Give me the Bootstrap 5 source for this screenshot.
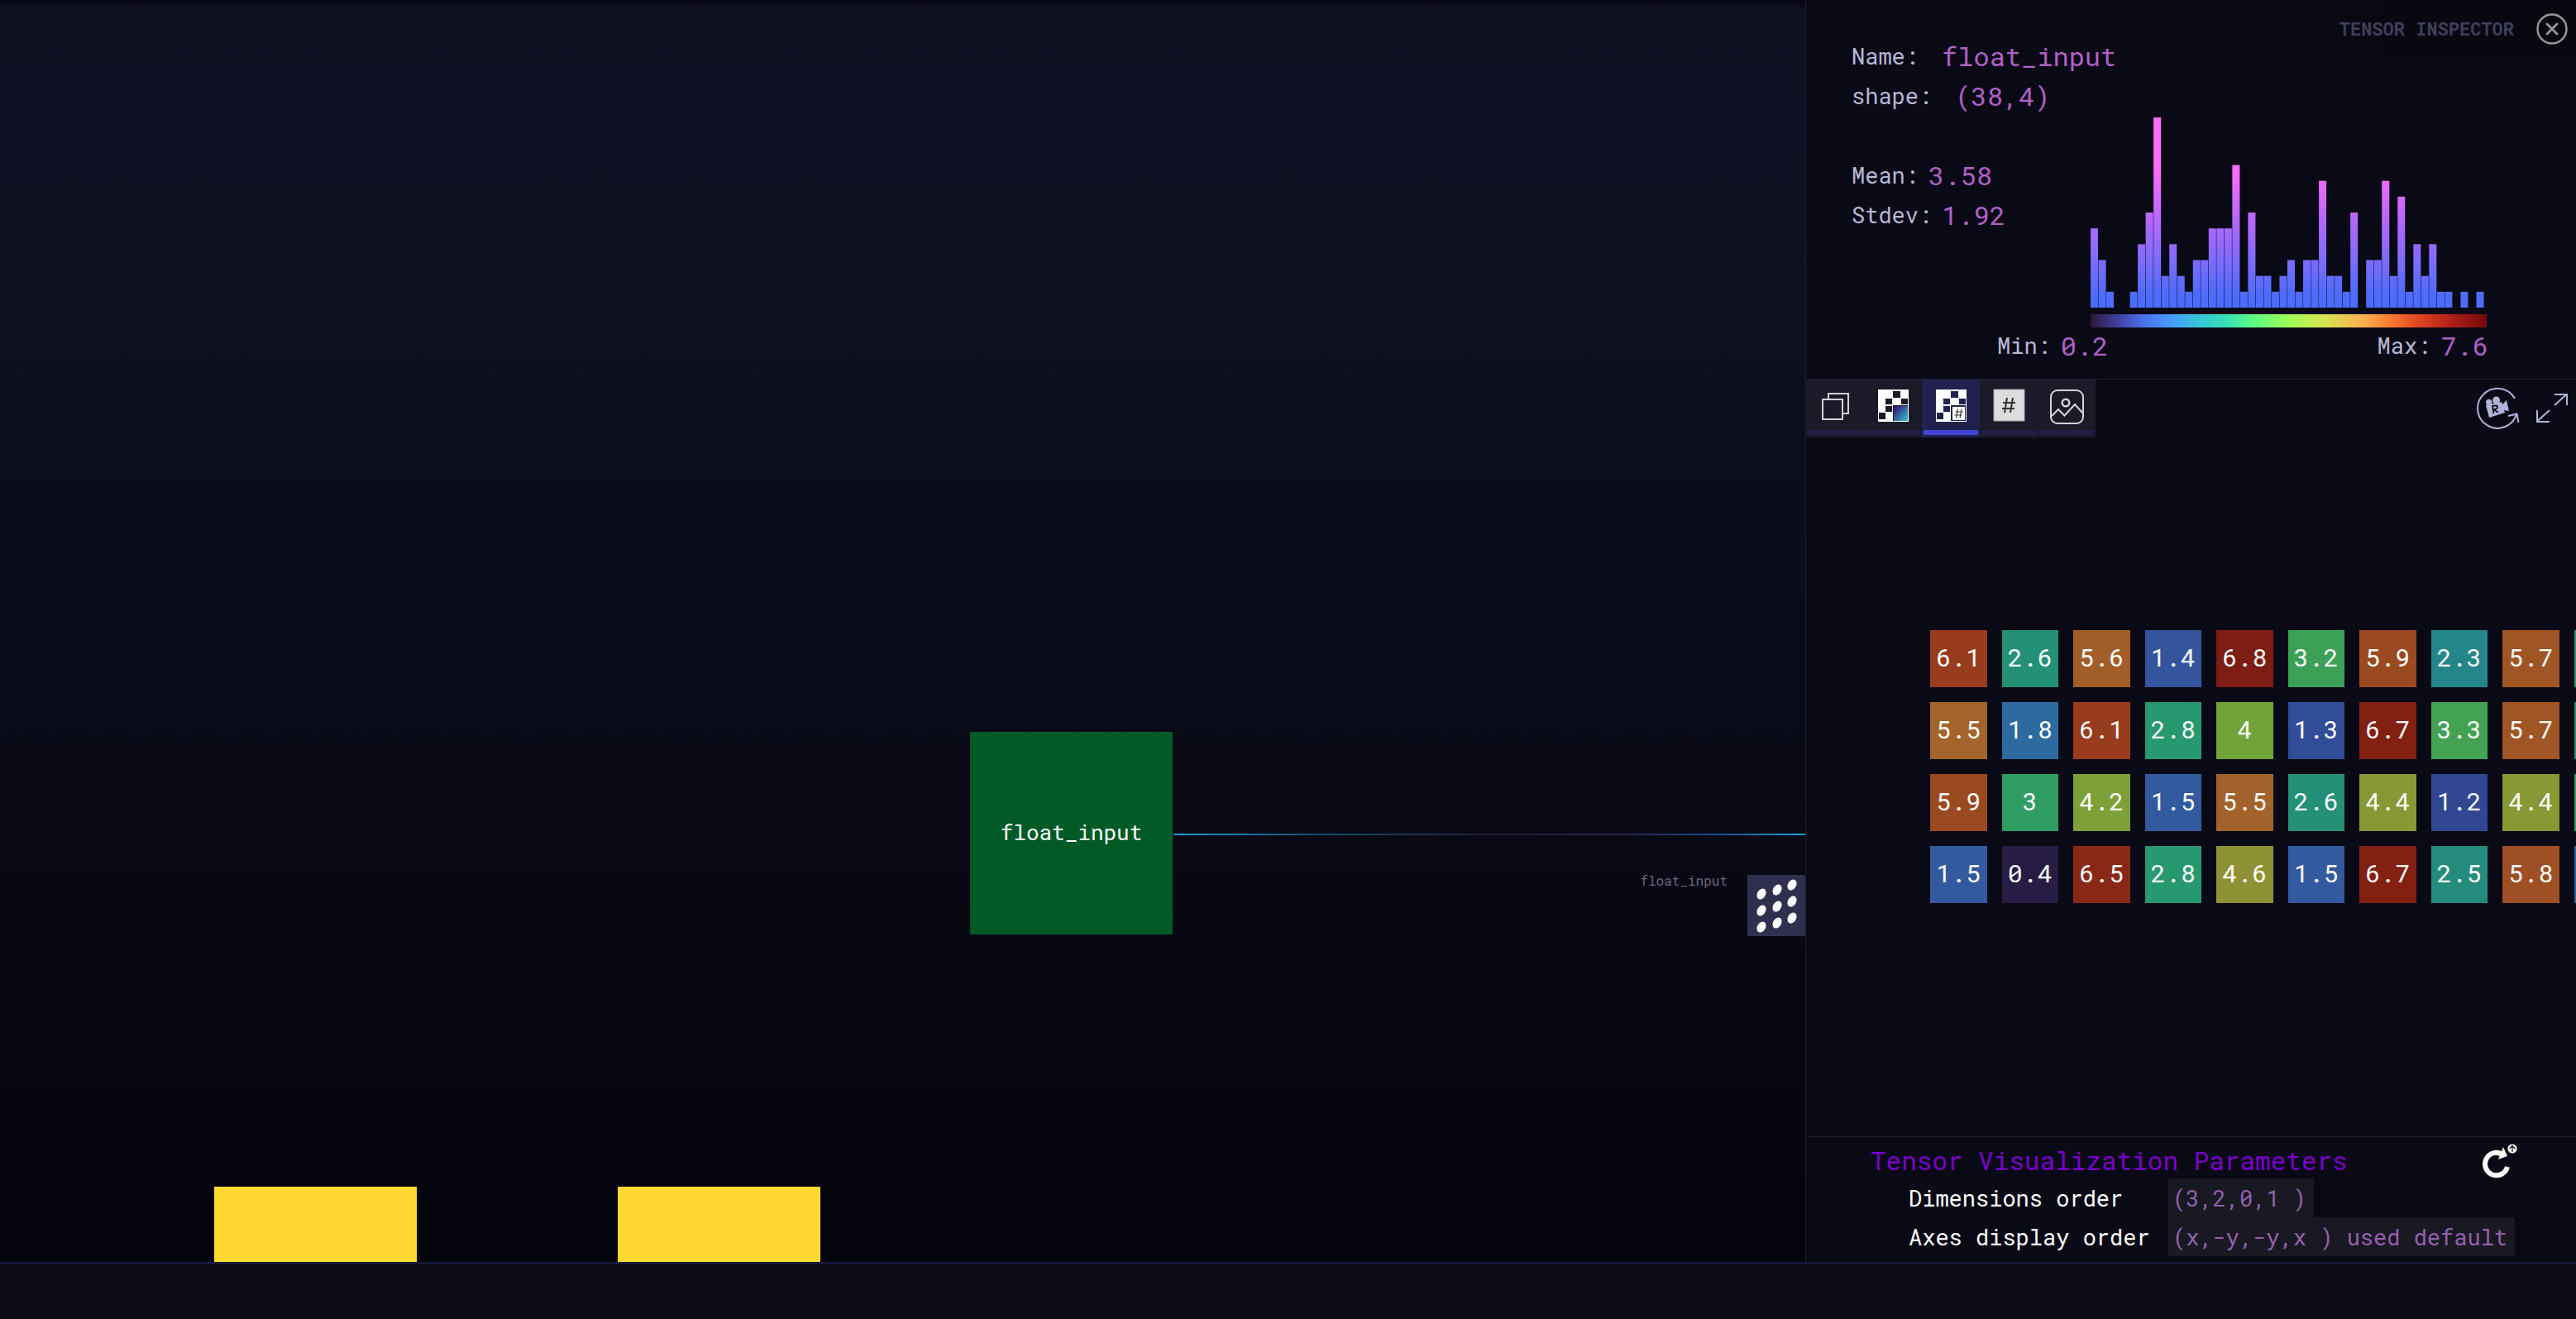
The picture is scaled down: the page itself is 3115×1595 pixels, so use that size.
<!DOCTYPE html>
<html lang="en">
<head>
<meta charset="utf-8">
<meta name="viewport" content="width=device-width, initial-scale=1">
<title>Tensor Inspector</title>
<link rel="stylesheet" href="https://cdn.jsdelivr.net/npm/bootstrap@5.3.0/dist/css/bootstrap.min.css">
<style>
:root { --panel: #0a0a16; --line: #1f1e2c; --accent: #b160c8; --soft: #b9b7d6; }
body { background: var(--panel); color: var(--soft); font-family: "Roboto Mono", "DejaVu Sans Mono", "Liberation Mono", monospace; font-size: 27px; line-height: 48px; }
h1, h2, p, dl, dd, dt, figure { margin: 0; font-weight: 400; }
.graph { background: linear-gradient(#060614 0, #0f1022 10px, #101124 10%, #0a0b18 55%, #04040c 95%, #04040c 100%); }
.node, .wire, .port-name, .port { position: absolute; }
.node { width: 245px; height: 245px; font-size: 26px; color: #fff; }
.node-input { left: 1173px; top: 885px; padding-bottom: 3px; background: #005a26; }
.node-a { left: 259px; top: 1435px; background: #ffd932; }
.node-b { left: 747px; top: 1435px; background: #ffd932; }
.wire { left: 1419px; right: 0; top: 1008px; height: 2px; background: linear-gradient(90deg, #0f9ad2, #14506f 22%, #221c3a 50%, #2a2150 72%, #1a5590 88%, #06a5dc); }
.port-name { right: 94px; top: 1053px; font-size: 16px; line-height: 24px; color: #6b6882; }
.port { right: 0; top: 1058px; width: 70px; height: 74px; background: #302f50; }
.inspector { flex: 0 0 932px; border-left: 1px solid var(--line); background: var(--panel); }
.top-strip { position: absolute; inset: 0 0 auto 0; height: 69px; padding-right: 10px; gap: 27px; background: linear-gradient(90deg, transparent 50%, #07070f); }
.top-strip h1 { font-size: 22px; line-height: 24px; font-weight: 700; color: #403e59; }
.plain-btn { border: 0; padding: 0; background: none; line-height: 0; }
.stats { padding: 44px 106px 18px 55px; border-bottom: 1px solid var(--line); }
.stats dd, .hist-caption output { font-size: 32px; color: var(--accent); }
.histogram-box { padding-top: 2px; }
.scale-strip { height: 16px; margin: 8px 2px 0 0; background: linear-gradient(90deg, #30173b, #4040a0 7%, #4a6fe8 13%, #4799fc 20%, #37c0de 26%, #35e0b8 34%, #5cf984 41%, #a0fc56 50%, #d0e850 58%, #fbb050 69%, #f87830 76%, #e04422 83%, #b02018 91%, #75090c); }
.hist-caption { margin-left: -113px; line-height: 44px; }
.mode-tabs { height: 70px; }
.mode-tabs button { width: 70px; height: 70px; background: #1b1a29; padding-bottom: 3px; }
.mode-tabs button::after { content: ""; display: block; height: 6px; margin: 0 2px; background: #211f44; }
.mode-tabs button.active { background: #21214f; }
.mode-tabs button.active::after { background: #4343d4; }
.view-tools { padding: 4px 7px 6px 0; gap: 14px; }
.values { table-layout: fixed; width: 883px; border-collapse: separate; border-spacing: 18px; margin: 0 0 0 132px; font-size: 30px; line-height: 30px; color: #fff; }
.values td { height: 69px; padding: 0 0 4px; text-align: center; vertical-align: middle; overflow: hidden; }
.tensor-view { padding-top: 215px; }
.params { border-top: 1px solid var(--line); padding: 6px 71px 0 78px; height: 152px; }
.params h2 { font-size: 31px; line-height: 44px; color: #7b00cc; }
.params dl { padding-left: 46px; grid-template-columns: 314px auto; line-height: 47px; color: #fff; }
.params dd { padding: 0 9px 0 5px; background: #191924; color: #9560ae; }
.status-bar { height: 69px; border-top: 3px solid #16193a; background: #0a0b14; }
</style>
<script src="https://cdn.jsdelivr.net/npm/bootstrap@5.3.0/dist/js/bootstrap.bundle.min.js"></script>
</head>
<body class="d-flex flex-column vh-100 overflow-hidden">
<div class="d-flex flex-grow-1 overflow-hidden">
  <main class="graph flex-grow-1 position-relative overflow-hidden">
    <div class="wire"></div>
    <div class="node node-input d-flex align-items-center justify-content-center">float_input</div>
    <div class="node node-a"></div>
    <div class="node node-b"></div>
    <div class="port-name">float_input</div>
    <svg class="port" viewBox="0 0 70 74"><g fill="#fff">
      <ellipse cx="17" cy="23" rx="5" ry="7" transform="rotate(30 17 23)"/><ellipse cx="36" cy="18" rx="5" ry="7" transform="rotate(30 36 18)"/><ellipse cx="54" cy="12" rx="5" ry="7" transform="rotate(30 54 12)"/>
      <ellipse cx="17" cy="43" rx="5" ry="7" transform="rotate(30 17 43)"/><ellipse cx="36" cy="38" rx="5" ry="7" transform="rotate(30 36 38)"/><ellipse cx="54" cy="32" rx="5" ry="7" transform="rotate(30 54 32)"/>
      <ellipse cx="17" cy="63" rx="5" ry="7" transform="rotate(30 17 63)"/><ellipse cx="36" cy="58" rx="5" ry="7" transform="rotate(30 36 58)"/><ellipse cx="54" cy="52" rx="5" ry="7" transform="rotate(30 54 52)"/>
    </g></svg>
  </main>

  <aside class="inspector d-flex flex-column position-relative overflow-hidden">
    <header class="top-strip d-flex align-items-center justify-content-end">
      <h1>TENSOR INSPECTOR</h1>
      <button class="plain-btn" type="button" aria-label="Close"><svg width="38" height="38" viewBox="0 0 38 38" fill="none" stroke="#98989a" stroke-linecap="round"><circle cx="19" cy="19" r="17.5" stroke-width="2.4"/><path d="M13 13l12 12M25 13L13 25" stroke-width="2.8"/></svg></button>
    </header>

    <section class="stats">
      <dl class="d-flex"><dt>Name:</dt><dd class="ms-4 ps-1">float_input</dd></dl>
      <dl class="d-flex"><dt>shape:</dt><dd class="ms-4 ps-1">(38,4)</dd></dl>
      <div class="d-flex">
        <div class="pt-5">
          <dl class="d-flex gap-2"><dt>Mean:</dt><dd class="ps-1">3.58</dd></dl>
          <dl class="d-flex gap-2"><dt>Stdev:</dt><dd class="ps-1">1.92</dd></dl>
        </div>
        <figure class="histogram-box ms-auto">
          <svg class="d-block" id="histogram" width="481" height="230" viewBox="0 0 481 230" role="img" aria-label="Value histogram">
            <defs><linearGradient id="heat" gradientUnits="userSpaceOnUse" x1="0" y1="0" x2="0" y2="230"><stop offset="0" stop-color="#ff6bff"/><stop offset=".28" stop-color="#ff6bff"/><stop offset=".54" stop-color="#b568ff"/><stop offset=".77" stop-color="#7a6bff"/><stop offset=".93" stop-color="#4d6cff"/><stop offset="1" stop-color="#4d6cff"/></linearGradient></defs>
          </svg>
          <div class="scale-strip"></div>
          <figcaption class="hist-caption d-flex justify-content-between">
            <span class="d-flex gap-2">Min: <output class="ps-1">0.2</output></span>
            <span class="d-flex gap-2">Max: <output class="ps-1">7.6</output></span>
          </figcaption>
        </figure>
      </div>
    </section>

    <nav class="d-flex justify-content-between" aria-label="Tensor view">
      <div class="mode-tabs d-flex">
        <button class="plain-btn" type="button" aria-label="Layers"><svg width="70" height="60" fill="none" stroke="#d0d0d6" stroke-width="2"><path d="M20 23h24v24H20zM27 23v-7h24v24h-7"/></svg></button>
        <button class="plain-btn" type="button" aria-label="Heat map"><svg width="70" height="60"><defs><linearGradient id="tile" x1="0" y1="0" x2="1" y2="1"><stop stop-color="#35086e"/><stop offset="1" stop-color="#32c8cc"/></linearGradient></defs><path fill="#fff" d="M17 11h37v39H17z"/><path fill="#1b1a29" d="M35 13h9v8h-9zM26 22h8v7h-8zM45 22h8v7h-8zM26 31h8v7h-8zM18 39h8v8h-8zM35 30h18v19H35z"/><path fill="url(#tile)" d="M36 31h17v18H36z"/></svg></button>
        <button class="plain-btn active" type="button" aria-label="Heat map with numbers" aria-pressed="true"><svg width="70" height="60"><path fill="#fff" d="M17 11h37v39H17z"/><path fill="#21214f" d="M35 13h9v8h-9zM26 22h8v7h-8zM45 22h8v7h-8zM26 31h8v7h-8zM18 39h8v8h-8zM35 30h18v19H35z"/><path fill="#fff" d="M37 32h15v16H37z"/><path fill="none" stroke="#333" stroke-width="1.200" d="M43.500 34.500l-2 11M48 34.500l-2 11M40.500 38h9M39.500 42h9"/></svg></button>
        <button class="plain-btn" type="button" aria-label="Numbers"><svg width="70" height="60"><path fill="#dcdcde" stroke="#a4a4ac" d="M17 11h37v38H17z"/><path fill="none" stroke="#333" stroke-width="2" d="M33 21l-3 18M40 21l-3 18M28 27h15M27 34h15"/></svg></button>
        <button class="plain-btn" type="button" aria-label="Image"><svg width="70" height="60" fill="none" stroke="#d4d4d8" stroke-width="2"><rect x="16" y="12" width="39" height="40" rx="8"/><circle cx="34" cy="27" r="4.3" stroke-width="2.4"/><path d="M17 43l8-8 7.500 7.500L45 29l10 11"/></svg></button>
      </div>
      <div class="view-tools d-flex">
        <button class="plain-btn" type="button" aria-label="Reset camera"><svg width="60" height="60" fill="none" stroke="#b4b2d8" stroke-width="2"><path d="M51 19A24 24 0 1 0 53 38M43 40l10.500-2.500L55.500 48"/><g fill="#b4b2d8" stroke="none"><circle cx="19.700" cy="23.500" r="3.700"/><circle cx="28.500" cy="21" r="4.500"/><path d="M16 27l19-4 1 3 5-5 3 13-6-1 1 3-19 6z"/></g><path stroke="#0a0a16" stroke-width="1.700" d="M25.500 37l-1.500-9 4-.6q2.500.3 2 2.300t-4.500 2.500l5.500 3.500"/></svg></button>
        <button class="plain-btn" type="button" aria-label="Expand"><svg width="44" height="60" fill="none" stroke="#b4b2d8" stroke-width="2"><path d="M25 27L40 13.500M25 14h15v13M19 33L4 46.500M4 33v14h15"/></svg></button>
      </div>
    </nav>

    <section class="tensor-view flex-grow-1 overflow-hidden">
      <table class="values" aria-label="Tensor values"><tbody id="cells"></tbody></table>
    </section>

    <section class="params">
      <div class="d-flex justify-content-between">
        <h2>Tensor Visualization Parameters</h2>
        <button class="plain-btn" type="button" aria-label="Reset parameters"><svg width="42" height="44" fill="none"><path d="M30 30A13.700 13.700 0 1 1 24 15" stroke="#fff" stroke-width="6"/><path d="M25 6l5 11-11 4z" fill="#fff"/><circle cx="36" cy="8" r="5.600" fill="#fff"/><path d="M36 12V5M32.500 8L36 4.500 39.500 8" stroke="#0a0a16" stroke-width="1.200"/></svg></button>
      </div>
      <dl class="d-grid">
        <dt>Dimensions order</dt><dd class="me-auto">(3,2,0,1 )</dd>
        <dt>Axes display order</dt><dd class="me-auto text-nowrap">(x,-y,-y,x ) used default</dd>
      </dl>
    </section>
  </aside>
</div>
<footer class="status-bar flex-shrink-0"></footer>

<script>
const counts = [5,3,1,0,0,1,4,6,12,2,4,2,1,3,3,5,5,5,9,1,6,2,2,1,2,3,1,3,3,8,2,2,1,6,0,3,3,8,2,7,1,4,2,4,1,1,0,1,0,1];
const chart = document.getElementById('histogram');
const step = 9.52, unit = 230 / 12;
counts.forEach((n, i) => {
  if (!n) return;
  const bar = document.createElementNS('http://www.w3.org/2000/svg', 'rect');
  bar.setAttribute('x', i * step);
  bar.setAttribute('y', 230 - n * unit);
  bar.setAttribute('width', step - 0.5);
  bar.setAttribute('height', n * unit);
  bar.setAttribute('fill', 'url(#heat)');
  chart.append(bar);
});
const rows = [
  [['6.1','#993c1e'],['2.6','#259078'],['5.6','#a25e29'],['1.4','#34559e'],['6.8','#7d1d13'],['3.2','#3ca157'],['5.9','#9b4920'],['2.3','#24858a'],['5.7','#a05525'],['','#29966c']],
  [['5.5','#a2642b'],['1.8','#2c6a9f'],['6.1','#993c1e'],['2.8','#289870'],['4','#70a338'],['1.3','#324d98'],['6.7','#822113'],['3.3','#43a253'],['5.7','#a05525'],['','#259078']],
  [['5.9','#9b4920'],['3','#2f9d63'],['4.2','#7da038'],['1.5','#335a9f'],['5.5','#a2622b'],['2.6','#259078'],['4.4','#879834'],['1.2','#314791'],['4.4','#879834'],['','#2f9d63']],
  [['1.5','#335a9f'],['0.4','#271c43'],['6.5','#8a2817'],['2.8','#289870'],['4.6','#8f9234'],['1.5','#335a9f'],['6.7','#822113'],['2.5','#248c7c'],['5.8','#9e4f24'],['','#2d649f']]
];
const body = document.getElementById('cells');
for (const row of rows) {
  const tr = body.insertRow();
  for (const [text, colour] of row) {
    const td = tr.insertCell();
    td.textContent = text;
    td.style.backgroundColor = colour;
  }
}
</script>
</body>
</html>
